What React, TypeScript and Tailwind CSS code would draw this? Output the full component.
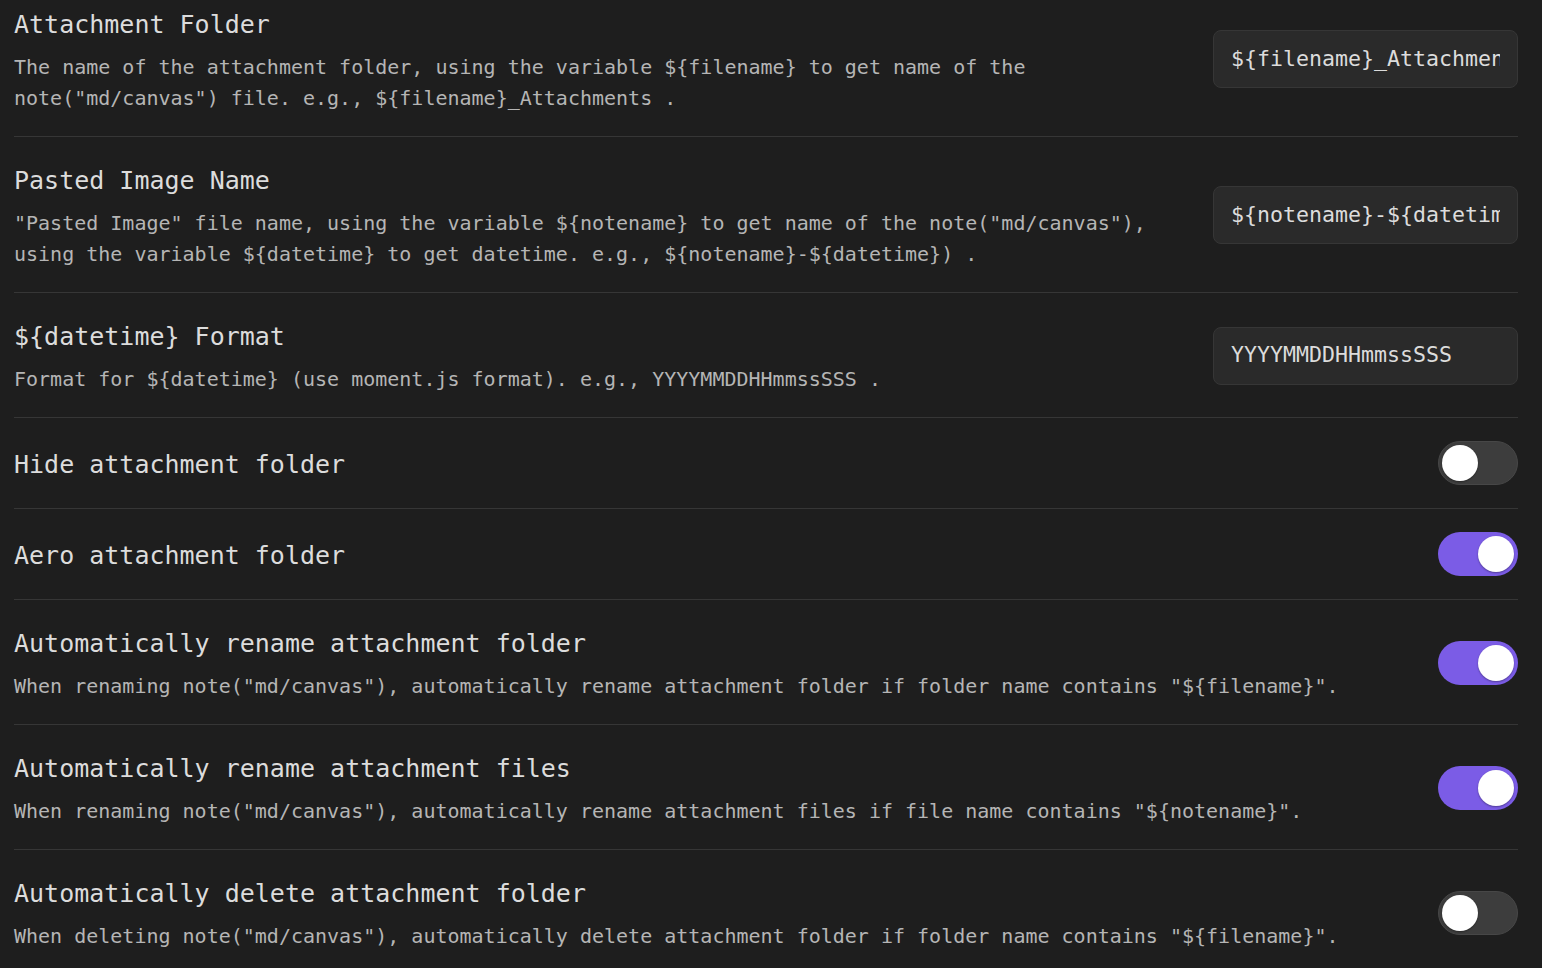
import type { ReactNode } from "react";

type Row =
  | { kind: "text"; name: string; desc: string[]; value: string }
  | { kind: "toggle"; name: string; desc?: string; on: boolean };

const rows: Row[] = [
  {
    kind: "text",
    name: "Attachment Folder",
    desc: [
      "The name of the attachment folder, using the variable ${filename} to get name of the",
      'note("md/canvas") file. e.g., ${filename}_Attachments .',
    ],
    value: "${filename}_Attachments",
  },
  {
    kind: "text",
    name: "Pasted Image Name",
    desc: [
      '"Pasted Image" file name, using the variable ${notename} to get name of the note("md/canvas"),',
      "using the variable ${datetime} to get datetime. e.g., ${notename}-${datetime}) .",
    ],
    value: "${notename}-${datetime}",
  },
  {
    kind: "text",
    name: "${datetime} Format",
    desc: ["Format for ${datetime} (use moment.js format). e.g., YYYYMMDDHHmmssSSS ."],
    value: "YYYYMMDDHHmmssSSS",
  },
  { kind: "toggle", name: "Hide attachment folder", on: false },
  { kind: "toggle", name: "Aero attachment folder", on: true },
  {
    kind: "toggle",
    name: "Automatically rename attachment folder",
    desc: 'When renaming note("md/canvas"), automatically rename attachment folder if folder name contains "${filename}".',
    on: true,
  },
  {
    kind: "toggle",
    name: "Automatically rename attachment files",
    desc: 'When renaming note("md/canvas"), automatically rename attachment files if file name contains "${notename}".',
    on: true,
  },
  {
    kind: "toggle",
    name: "Automatically delete attachment folder",
    desc: 'When deleting note("md/canvas"), automatically delete attachment folder if folder name contains "${filename}".',
    on: false,
  },
];

function Toggle(props: { on: boolean }) {
  return (
    <div
      className={
        props.on
          ? "flex h-[44px] w-[80px] shrink-0 items-center justify-end rounded-full bg-[#7b5ce6] px-[4px]"
          : "flex h-[44px] w-[80px] shrink-0 items-center justify-start rounded-full border border-[#474747] bg-[#3d3d3d] px-[3px]"
      }
    >
      <div className="h-[36px] w-[36px] rounded-full bg-white shadow-[0_1px_2px_rgba(0,0,0,0.35)]" />
    </div>
  );
}

// the value is clipped by the box, as in an input that is too narrow
function TextInput(props: { value: string }) {
  return (
    <div className="flex h-[58px] w-[305px] shrink-0 items-center overflow-hidden rounded-[8px] border border-[#363636] bg-[#2a2a2a] px-[17px]">
      <span className="block overflow-hidden whitespace-pre text-[21.6px] text-[#dcdcdc]">
        {props.value}
      </span>
    </div>
  );
}

function SettingItem(props: {
  first: boolean;
  compact: boolean;
  name: string;
  desc: string[];
  control: ReactNode;
}) {
  const pad = props.first
    ? "pt-[6px] pb-[24px]"
    : props.compact
      ? "border-t border-[#363636] pt-[23px] pb-[23px]"
      : "border-t border-[#363636] pt-[25px] pb-[24px]";
  return (
    <div className={`flex items-center justify-between gap-6 ${pad}`}>
      <div className="min-w-0 translate-y-[2px]">
        <div className="text-[25px] leading-[34px] text-[#dcdcdc]">{props.name}</div>
        {props.desc.length > 0 && (
          <div className="mt-[10px] text-[20px] leading-[31px] text-[#b5b5b5]">
            {props.desc.map((line) => (
              <div key={line} className="whitespace-pre">
                {line}
              </div>
            ))}
          </div>
        )}
      </div>
      {props.control}
    </div>
  );
}

export default function App() {
  return (
    <div className="min-h-[968px] w-full bg-[#1e1e1e] font-['DejaVu_Sans_Mono',monospace]">
      <div className="ml-[14px] mr-[24px] flex flex-col">
        {rows.map((row, i) => (
          <SettingItem
            key={row.name}
            first={i === 0}
            compact={row.kind === "toggle" && !row.desc}
            name={row.name}
            desc={row.kind === "text" ? row.desc : row.desc ? [row.desc] : []}
            control={
              row.kind === "text" ? <TextInput value={row.value} /> : <Toggle on={row.on} />
            }
          />
        ))}
      </div>
    </div>
  );
}
